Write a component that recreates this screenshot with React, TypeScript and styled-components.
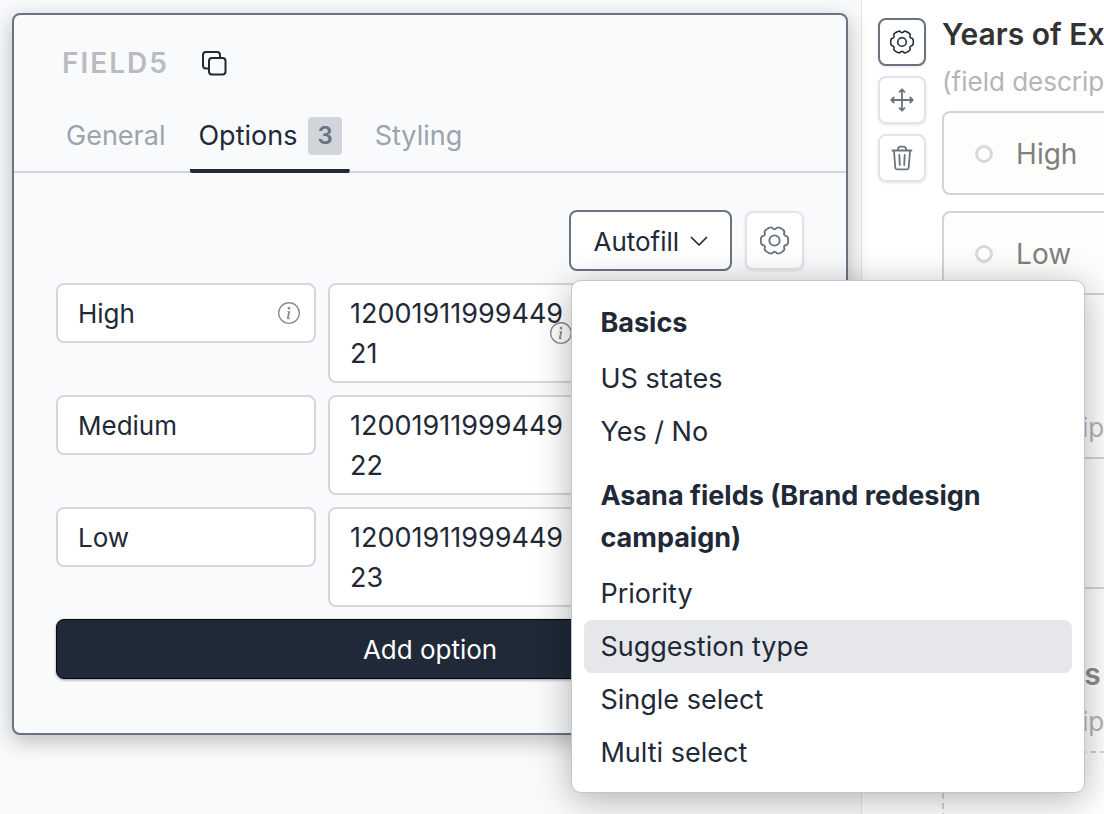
import React from "react";
import styled, { createGlobalStyle, css } from "styled-components";
import { BsInfoCircle } from "react-icons/bs";

const GlobalStyle = createGlobalStyle`
  *, *::before, *::after { box-sizing: border-box; }
  body {
    margin: 0;
    background: #f9fafb;
    color: #1f2937;
    font-family: Inter, "Liberation Sans", sans-serif;
    font-size: 26px;
    line-height: 40px;
  }
  button, input, textarea { font: inherit; color: inherit; margin: 0; }
  h2, h3, p, ul { margin: 0; padding: 0; }
`;

const Page = styled.div`
  display: grid;
  grid-template-columns: minmax(0, 78fr) minmax(0, 22fr);
  min-height: 100vh;
  overflow: hidden;
`;

const EditorPane = styled.main`
  position: relative;
  z-index: 1;
  padding: 13px 13px 79px 12px;
  background: #f9fafc;
`;

const Card = styled.section`
  border: 2px solid #6b7280;
  border-radius: 8px;
  background: #f9fafc;
  box-shadow: 0 6px 22px rgba(0, 0, 0, 0.26);
`;

const CardHeader = styled.header`
  display: flex;
  align-items: center;
  gap: 32px;
  padding: 28px 48px 0;
`;

const FieldName = styled.h2`
  font-size: 28px;
  font-weight: 600;
  line-height: 40px;
  letter-spacing: 2px;
  color: #b9bbbf;
`;

const PlainButton = styled.button`
  display: flex;
  padding: 0;
  border: 0;
  background: none;
`;

const Tabs = styled.div`
  display: flex;
  gap: 17px;
  margin-top: 24px;
  padding: 0 44px;
  border-bottom: 2px solid #d1d5db;
`;

const Tab = styled.button<{ $active?: boolean }>`
  display: flex;
  align-items: center;
  gap: 11px;
  height: 66px;
  margin-bottom: -2px;
  padding: 0 8px 9px;
  border: 0;
  background: none;
  color: #9ca3af;
  font-size: 27px;
  ${(p) =>
    p.$active &&
    css`
      color: #1f2937;
      background: linear-gradient(#1f2937, #1f2937) bottom / 100% 4px no-repeat;
      border-radius: 2px;
    `}
`;

const Badge = styled.span`
  padding: 0 9px;
  border-radius: 4px;
  background: #d1d5db;
  color: #6b7280;
  font-size: 24px;
  font-weight: 600;
  line-height: 38px;
`;

const CardBody = styled.div`
  display: flex;
  flex-direction: column;
  gap: 12px;
  padding: 37px 42px 54px;
`;

const Toolbar = styled.div`
  display: flex;
  justify-content: flex-end;
  align-items: center;
  gap: 13px;
`;

const MenuAnchor = styled.div`
  position: relative;
`;

const AutofillButton = styled.button`
  display: flex;
  align-items: center;
  gap: 11px;
  height: 61px;
  padding: 2px 22px 0;
  border: 2px solid #6b7280;
  border-radius: 8px;
  background: #fff;
`;

const IconButton = styled.button<{ $size: number; $active?: boolean }>`
  display: flex;
  align-items: center;
  justify-content: center;
  width: ${(p) => p.$size}px;
  height: ${(p) => p.$size}px;
  padding: 0;
  border: 2px solid ${(p) => (p.$active ? "#6b7280" : "#e2e4e8")};
  border-radius: 8px;
  background: #fff;
  color: ${(p) => (p.$active ? "#1f2937" : "#6b7280")};
  box-shadow: 0 1px 3px rgba(0, 0, 0, 0.1);
`;

const OptionRow = styled.div`
  display: grid;
  grid-template-columns: minmax(0, 1fr) minmax(0, 1fr) 204px;
  align-items: start;
  gap: 12px;
`;

const Cell = styled.div`
  position: relative;
  display: flex;
`;

const fieldBox = css`
  display: block;
  width: 100%;
  border: 2px solid #d5d7db;
  border-radius: 8px;
  background: #fff;
  outline: none;
`;

const LabelInput = styled.input`
  ${fieldBox}
  height: 60px;
  padding: 0 20px;
`;

const ValueInput = styled.textarea`
  ${fieldBox}
  height: 100px;
  padding: 9px 20px 7px;
  font-size: 27px;
  resize: none;
  overflow: hidden;
  word-break: break-all;
`;

const InfoMark = styled.span`
  position: absolute;
  top: 0;
  right: 16px;
  bottom: 0;
  display: flex;
  align-items: center;
  color: #8b8d91;
  font-size: 22px;
`;

const AddButton = styled.button`
  height: 60px;
  padding: 2px 0 0;
  border: 1px solid #05070a;
  border-radius: 8px;
  background: #1f2937;
  color: #fff;
  box-shadow: 0 1px 3px rgba(0, 0, 0, 0.4);
`;

const Menu = styled.div`
  position: absolute;
  top: 70px;
  left: 2px;
  z-index: 5;
  width: 514px;
  padding: 13px 12px;
  border: 1px solid #c4c5c8;
  border-radius: 10px;
  background: #fff;
  box-shadow: 0 6px 36px rgba(0, 0, 0, 0.3);
`;

const MenuGroup = styled.div`
  & + & { margin-top: 9px; }
`;

const MenuHeading = styled.h3`
  padding: 8px 16px;
  font-size: 27px;
  font-weight: 700;
  line-height: 42px;
`;

const MenuItem = styled.button<{ $highlighted?: boolean }>`
  display: block;
  width: 100%;
  height: 53px;
  padding: 0 16px;
  border: 0;
  border-radius: 8px;
  background: ${(p) => (p.$highlighted ? "#e5e7eb" : "none")};
  font-size: 27px;
  text-align: left;
`;

const PreviewPane = styled.aside`
  display: flex;
  gap: 16px;
  min-width: 0;
  height: 100vh;
  padding: 14px 0 0 16px;
  border-left: 1px solid #e5e7eb;
  background: #fff;
  overflow: hidden;
`;

const Tools = styled.div`
  display: flex;
  flex: none;
  flex-direction: column;
  gap: 10px;
  padding-top: 4px;
`;

const Fields = styled.div`
  display: flex;
  flex: none;
  flex-direction: column;
  gap: 65px;
  width: 640px;
`;

const Field = styled.section`
  display: flex;
  flex-direction: column;
`;

const FieldTitle = styled.h2<{ $dim?: boolean }>`
  font-size: 30px;
  font-weight: 600;
  line-height: 40px;
  color: ${(p) => (p.$dim ? "#8c8c8c" : "#333")};
`;

const FieldDescription = styled.p`
  margin: 8px 0 9px;
  font-size: 26px;
  line-height: 40px;
  color: #b5b5b5;
`;

const Choices = styled.div`
  display: flex;
  flex-direction: column;
  gap: 16px;
`;

const Choice = styled.label`
  display: flex;
  align-items: center;
  gap: 23px;
  height: 84px;
  padding: 1px 0 0 31px;
  border: 2px solid #d2d3d5;
  border-radius: 8px;
  background: #fdfdfc;
  color: #808080;
  font-size: 28px;
`;

const Radio = styled.input`
  appearance: none;
  width: 18px;
  height: 18px;
  margin: 0;
  border: 3px solid #d9d9d9;
  border-radius: 50%;
  background: #fff;
`;

const AnswerBox = styled.textarea`
  height: 132px;
  border: 2px solid #d2d3d5;
  border-radius: 8px;
  background: #fdfdfc;
  resize: none;
`;

const DropZone = styled.div`
  height: 132px;
  border: 2px dashed #d2d3d5;
  border-radius: 8px;
`;

const gearOutline = (() => {
  const at = (deg: number, r: number) => {
    const a = (deg * Math.PI) / 180;
    return `${(14 + r * Math.cos(a)).toFixed(2)} ${(14 + r * Math.sin(a)).toFixed(2)}`;
  };
  let d = `M${at(-25, 11.2)}`;
  for (let lobe = 0; lobe < 360; lobe += 60) {
    d += `Q${at(lobe - 19, 13.6)} ${at(lobe - 9, 13.2)}`;
    d += `Q${at(lobe, 13.4)} ${at(lobe + 9, 13.2)}`;
    d += `Q${at(lobe + 19, 13.6)} ${at(lobe + 25, 11.2)}`;
    d += `Q${at(lobe + 30, 10.6)} ${at(lobe + 35, 11.2)}`;
  }
  return `${d}Z`;
})();

const strokeProps = {
  fill: "none",
  stroke: "currentColor",
  strokeLinecap: "round",
  strokeLinejoin: "round",
  "aria-hidden": true,
} as const;

const GearIcon = ({ size }: { size: number }) => (
  <svg width={size} height={size} viewBox="0 0 28 28" strokeWidth={1.8} {...strokeProps}>
    <path d={gearOutline} />
    <circle cx="14" cy="14" r="5" />
  </svg>
);

const MoveIcon = () => (
  <svg width="24" height="24" viewBox="0 0 24 24" strokeWidth={1.8} {...strokeProps}>
    <path d="M12 1.5v21M1.5 12h21M9.5 3.8L12 1.3l2.5 2.5M9.5 20.2l2.5 2.5 2.5-2.5M3.8 9.5L1.3 12l2.5 2.5M20.2 9.5l2.5 2.5-2.5 2.5" />
  </svg>
);

const TrashIcon = () => (
  <svg width="22" height="26" viewBox="0 0 22 26" strokeWidth={1.8} {...strokeProps}>
    <path d="M1.5 5.5h19M6.5 5.2l1-2.6q.4-1 1.5-1h4q1.1 0 1.5 1l1 2.6M3 5.8l1.3 17q.1 1.5 1.5 1.5h10.4q1.4 0 1.5-1.5l1.3-17M8.3 10l.5 10M13.7 10l-.5 10" />
  </svg>
);

const CopyIcon = () => (
  <svg width="26" height="26" viewBox="0 0 26 26" strokeWidth={2} {...strokeProps}>
    <rect x="8" y="8" width="16.5" height="16.5" rx="3" />
    <path d="M7.5 18.5H5a3 3 0 0 1-3-3V5a3 3 0 0 1 3-3h11a3 3 0 0 1 3 3v2.5" />
  </svg>
);

const ChevronIcon = () => (
  <svg width="18" height="12" viewBox="0 0 18 12" strokeWidth={1.7} {...strokeProps}>
    <path d="M1.5 1.5L9 9l7.5-7.5" />
  </svg>
);

const options = [
  { label: "High", value: "1200191199944921" },
  { label: "Medium", value: "1200191199944922" },
  { label: "Low", value: "1200191199944923" },
];

const menuGroups = [
  { heading: "Basics", items: ["US states", "Yes / No"] },
  {
    heading: "Asana fields (Brand redesign campaign)",
    items: ["Priority", "Suggestion type", "Single select", "Multi select"],
  },
];

export default function App() {
  return (
    <>
      <GlobalStyle />
      <Page>
        <EditorPane>
          <Card>
            <CardHeader>
              <FieldName>FIELD5</FieldName>
              <PlainButton aria-label="Copy field name">
                <CopyIcon />
              </PlainButton>
            </CardHeader>
            <Tabs role="tablist">
              <Tab role="tab">General</Tab>
              <Tab role="tab" aria-selected $active>
                Options <Badge>3</Badge>
              </Tab>
              <Tab role="tab">Styling</Tab>
            </Tabs>
            <CardBody>
              <Toolbar>
                <MenuAnchor>
                  <AutofillButton aria-haspopup="menu" aria-expanded>
                    Autofill <ChevronIcon />
                  </AutofillButton>
                  <Menu role="menu">
                    {menuGroups.map((group) => (
                      <MenuGroup key={group.heading}>
                        <MenuHeading>{group.heading}</MenuHeading>
                        {group.items.map((item) => (
                          <MenuItem key={item} role="menuitem" $highlighted={item === "Suggestion type"}>
                            {item}
                          </MenuItem>
                        ))}
                      </MenuGroup>
                    ))}
                  </Menu>
                </MenuAnchor>
                <IconButton $size={59} aria-label="Option settings">
                  <GearIcon size={29} />
                </IconButton>
              </Toolbar>
              {options.map((option, i) => (
                <OptionRow key={option.label}>
                  <Cell>
                    <LabelInput aria-label="Option label" defaultValue={option.label} />
                    {i === 0 && (
                      <InfoMark>
                        <BsInfoCircle />
                      </InfoMark>
                    )}
                  </Cell>
                  <Cell>
                    <ValueInput aria-label="Option value" defaultValue={option.value} />
                    {i === 0 && (
                      <InfoMark>
                        <BsInfoCircle />
                      </InfoMark>
                    )}
                  </Cell>
                </OptionRow>
              ))}
              <AddButton>Add option</AddButton>
            </CardBody>
          </Card>
        </EditorPane>
        <PreviewPane>
          <Tools>
            <IconButton $size={48} $active aria-label="Field settings">
              <GearIcon size={24} />
            </IconButton>
            <IconButton $size={48} aria-label="Move field">
              <MoveIcon />
            </IconButton>
            <IconButton $size={48} aria-label="Delete field">
              <TrashIcon />
            </IconButton>
          </Tools>
          <Fields>
            <Field>
              <FieldTitle>Years of Experience</FieldTitle>
              <FieldDescription>(field description)</FieldDescription>
              <Choices>
                <Choice>
                  <Radio type="radio" name="level" />
                  High
                </Choice>
                <Choice>
                  <Radio type="radio" name="level" />
                  Low
                </Choice>
              </Choices>
            </Field>
            <Field>
              <FieldTitle $dim>Notes</FieldTitle>
              <FieldDescription>(field description)</FieldDescription>
              <AnswerBox aria-label="Notes" />
            </Field>
            <Field>
              <FieldTitle $dim>Media files</FieldTitle>
              <FieldDescription>(field description)</FieldDescription>
              <DropZone />
            </Field>
          </Fields>
        </PreviewPane>
      </Page>
    </>
  );
}
